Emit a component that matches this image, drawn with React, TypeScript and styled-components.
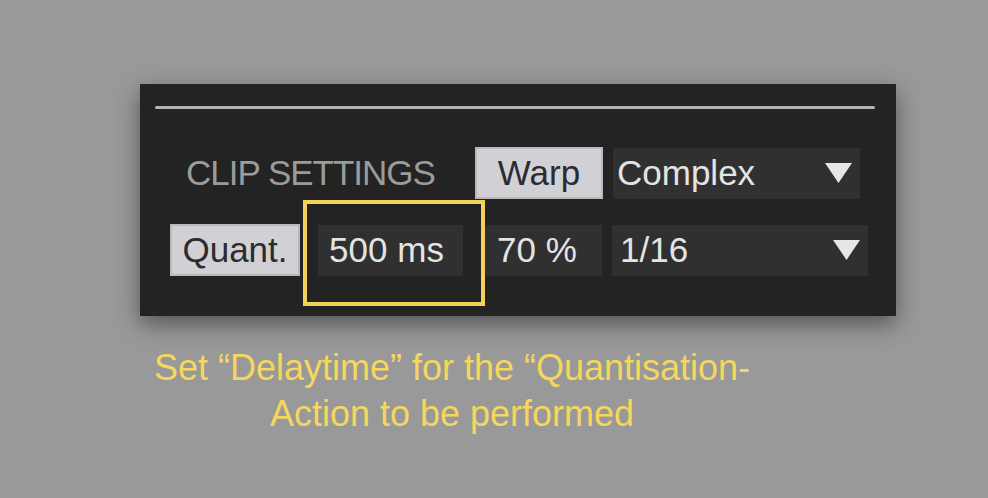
import React from 'react';
import styled, { createGlobalStyle } from 'styled-components';

const GlobalStyle = createGlobalStyle`
  html, body {
    margin: 0;
    padding: 0;
    background: #999999;
  }
  body {
    font-family: 'Liberation Sans', Arial, sans-serif;
  }
`;

const Page = styled.div`
  width: 988px;
  height: 498px;
  padding: 84px 0 0 140px;
  box-sizing: border-box;
  overflow: hidden;
`;

const Panel = styled.div`
  position: relative;
  width: 756px;
  height: 232px;
  background: #232323;
  box-sizing: border-box;
  padding: 22px 21px 0 15px;
  box-shadow: 0 8px 22px rgba(0, 0, 0, 0.45);
`;

const Divider = styled.div`
  height: 3px;
  background: #b4b4b4;
  border-radius: 2px;
`;

const Row = styled.div<{ $top: number; $left: number }>`
  display: flex;
  align-items: center;
  margin-top: ${(p) => p.$top}px;
  padding-left: ${(p) => p.$left}px;
`;

const SectionLabel = styled.div`
  width: 289px;
  font-size: 35px;
  letter-spacing: -1px;
  color: #9b9b9b;
  white-space: nowrap;
`;

const ToggleButton = styled.div<{ $w: number }>`
  width: ${(p) => p.$w}px;
  height: 52px;
  box-sizing: border-box;
  display: flex;
  align-items: center;
  justify-content: center;
  background: #d1d1d5;
  border: 2px solid #b9b9bd;
  color: #2b2b30;
  font-size: 35px;
`;

const Field = styled.div<{ $w: number; $pad: number; $gap: number; $center?: boolean }>`
  width: ${(p) => p.$w}px;
  height: 51px;
  margin-left: ${(p) => p.$gap}px;
  box-sizing: border-box;
  display: flex;
  align-items: center;
  justify-content: ${(p) => (p.$center ? 'center' : 'space-between')};
  padding: 0 8px 0 ${(p) => p.$pad}px;
  background: #303030;
  color: #e4e4e4;
  font-size: 35px;
  white-space: nowrap;
`;

const Arrow = styled.svg`
  width: 27px;
  height: 20px;
  flex-shrink: 0;
`;

const Highlight = styled.div`
  position: absolute;
  left: 163px;
  top: 116px;
  width: 182px;
  height: 106px;
  box-sizing: border-box;
  border: 4px solid #f3d25a;
  pointer-events: none;
`;

const Caption = styled.div`
  width: 640px;
  margin: 29px 0 0 -8px;
  text-align: center;
  font-size: 36px;
  line-height: 46px;
  color: #f5d65f;
`;

const DownArrow = () => (
  <Arrow viewBox="0 0 27 20">
    <polygon points="0,0 27,0 13.5,20" fill="#e6e6e6" />
  </Arrow>
);

export default function App() {
  return (
    <>
      <GlobalStyle />
      <Page>
        <Panel>
          <Divider />
          <Row $top={38} $left={31}>
            <SectionLabel>CLIP SETTINGS</SectionLabel>
            <ToggleButton $w={128}>Warp</ToggleButton>
            <Field $w={247} $pad={4} $gap={10}>
              <span>Complex</span>
              <DownArrow />
            </Field>
          </Row>
          <Row $top={25} $left={15}>
            <ToggleButton $w={130}>Quant.</ToggleButton>
            <Field $w={145} $pad={0} $gap={18} $center>
              500 ms
            </Field>
            <Field $w={117} $pad={12} $gap={22}>
              70 %
            </Field>
            <Field $w={256} $pad={8} $gap={10}>
              <span>1/16</span>
              <DownArrow />
            </Field>
          </Row>
          <Highlight />
        </Panel>
        <Caption>
          Set “Delaytime” for the “Quantisation-
          <br />
          Action to be performed
        </Caption>
      </Page>
    </>
  );
}
